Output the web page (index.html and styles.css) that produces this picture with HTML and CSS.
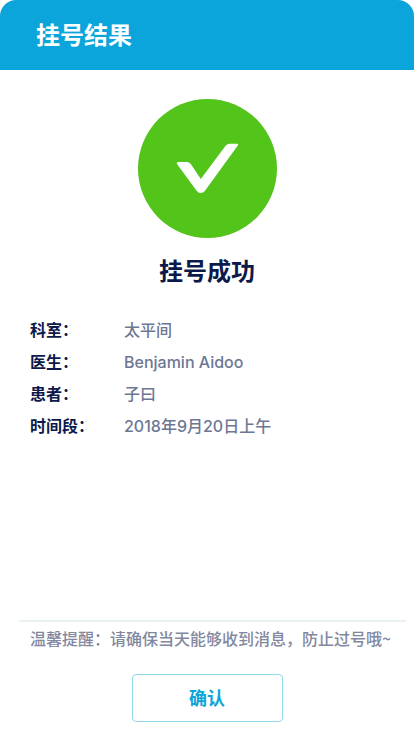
FILE: index.html
```html
<!DOCTYPE html>
<html lang="zh-CN">
<head>
  <meta charset="utf-8">
  <meta name="viewport" content="width=device-width, initial-scale=1">
  <title>挂号结果</title>
  <link rel="stylesheet" href="styles.css">
</head>
<body>
  <div class="page">
    <header class="header">
      <h1 class="header-title">挂号结果</h1>
    </header>
    <main class="content">
      <section class="result">
        <svg class="result-icon" viewBox="0 0 139 139" aria-hidden="true">
          <circle cx="69.5" cy="69.5" r="69.5" fill="#52c41a"/>
          <path fill="#fff" d="M40.5 63H48.5Q51.3 63 53 65.3L62.8 80L87.6 46.8Q89.2 44.7 91.8 44.7H99Q101 44.7 99.8 46.5L67 91.8Q65.4 94 62.8 94T58.6 91.8L39.2 65.3Q37.9 63 40.5 63Z"/>
        </svg>
        <h2 class="result-title">挂号成功</h2>
      </section>
      <dl class="details">
        <dt>科室：</dt>
        <dd>太平间</dd>
        <dt>医生：</dt>
        <dd>Benjamin Aidoo</dd>
        <dt>患者：</dt>
        <dd>子曰</dd>
        <dt>时间段：</dt>
        <dd>2018年9月20日上午</dd>
      </dl>
    </main>
    <footer class="footer">
      <p class="notice">温馨提醒：请确保当天能够收到消息，防止过号哦~</p>
      <button class="confirm" type="button">确认</button>
    </footer>
  </div>
</body>
</html>
```
FILE: styles.css
```css
* {
  box-sizing: border-box;
}

body {
  margin: 0;
  background: #fff;
  color: #0c1a4b;
  font-family: Inter, "Noto Sans CJK SC", sans-serif;
  font-size: 16px;
  font-weight: 500;
  line-height: 32px;
}

.page {
  display: flex;
  flex-direction: column;
  min-height: 100vh;
}

.header {
  padding: 20px 36px 18px;
  background: #0ba5db;
  border-radius: 16px 16px 0 0;
}

.header-title,
.result-title {
  margin: 0;
  font-size: 24px;
  font-weight: 700;
  line-height: 32px;
}

.header-title {
  color: #fff;
}

.content {
  flex: 1;
  padding: 29px 30px 0;
}

.result {
  display: flex;
  flex-direction: column;
  align-items: center;
  gap: 18px;
}

.result-icon {
  width: 139px;
  height: 139px;
}

.details {
  display: grid;
  grid-template-columns: 94px 1fr;
  margin: 26px 0 0;
}

.details dt {
  font-weight: 700;
}

.details dd {
  margin: 0;
  color: #6d7794;
}

.footer {
  display: flex;
  flex-direction: column;
  align-items: center;
  padding: 0 8px 14px 19px;
}

.notice {
  align-self: stretch;
  margin: 0 0 20px;
  padding-left: 11px;
  border-top: 2px solid #e9f1f3;
  color: #82889f;
  font-family: "Noto Sans CJK SC", sans-serif;
}

.confirm {
  width: 151px;
  height: 48px;
  margin-right: 11px;
  padding: 2px 0 0;
  border: 1px solid #93d8ec;
  border-radius: 4px;
  background: #fff;
  color: #0ba5db;
  font: inherit;
  font-size: 18px;
  font-weight: 700;
}
```
